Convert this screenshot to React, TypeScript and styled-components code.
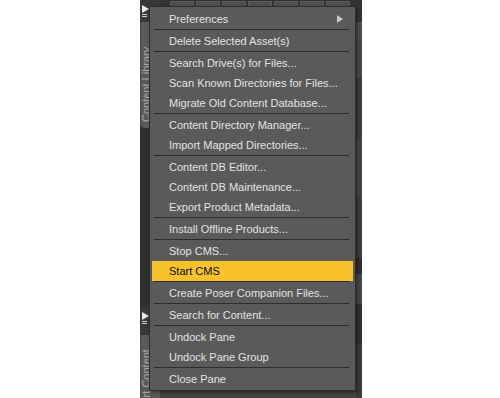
import React from 'react';
import styled, { createGlobalStyle } from 'styled-components';

const GlobalStyle = createGlobalStyle`
  html, body {
    margin: 0;
    padding: 0;
    background: #ffffff;
  }
  body {
    font-family: "Liberation Sans", Arial, sans-serif;
  }
`;

const Stage = styled.div`
  display: flex;
  height: 398px;
  padding-left: 140px;
  overflow: hidden;
`;

const AppWindow = styled.div`
  position: relative;
  width: 222px;
  height: 398px;
  display: grid;
  grid-template-columns: 20px 1fr;
  background: #3a3a3a;
  overflow: hidden;
`;

const Dock = styled.div`
  display: flex;
  flex-direction: column;
  background: #333333;
  overflow: hidden;
`;

const PaneHeader = styled.div<{ $h: number; $pt: number }>`
  flex: none;
  height: ${({ $h }) => $h}px;
  padding: ${({ $pt }) => $pt}px 0 0 1px;
  box-sizing: border-box;
  background: #383838;
`;

/* rotated 180deg: unrotated top becomes the tab's bottom, left becomes right */
const VTab = styled.div<{ $h: number; $pad: number }>`
  flex: none;
  height: ${({ $h }) => $h}px;
  box-sizing: border-box;
  padding: ${({ $pad }) => $pad}px 0 0 10px;
  background: #5a5a5a;
  border-radius: 5px 5px 0 0;
  border-right: 1px solid #4a4a4a;
  color: #a3a9b0;
  font-size: 11px;
  line-height: 10px;
  writing-mode: vertical-rl;
  transform: rotate(180deg);
  white-space: nowrap;
`;

const DockGap = styled.div<{ $h: number }>`
  flex: none;
  height: ${({ $h }) => $h}px;
  background: #2f2f2f;
`;

const Main = styled.div`
  display: flex;
  flex-direction: column;
`;

const TabStrip = styled.div`
  height: 22px;
  display: flex;
  gap: 2px;
  padding: 1px 0 0 10px;
  box-sizing: border-box;
  background: #333333;
`;

const TopTab = styled.div`
  width: 24px;
  height: 20px;
  background: #4e4e4e;
  border: 1px solid #5c5c5c;
  box-sizing: border-box;
`;

const Panel = styled.div`
  flex: 1;
  display: flex;
  justify-content: flex-end;
  background: #444444;
`;

const PanelEdge = styled.div`
  width: 6px;
  display: flex;
  flex-direction: column;
`;

const EdgeBlock = styled.div<{ $h: number; $c: string }>`
  height: ${({ $h }) => $h}px;
  background: ${({ $c }) => $c};
`;

const Menu = styled.div`
  position: absolute;
  left: 9px;
  top: 6px;
  width: 207px;
  box-sizing: border-box;
  background: #5a5a5a;
  border: 1px solid #2c2c2c;
  box-shadow: 2px 2px 3px rgba(0, 0, 0, 0.35);
  padding: 2px 2px 1px;
  font-family: "Liberation Sans", Arial, sans-serif;
  font-size: 11px;
`;

const Item = styled.div<{ $active?: boolean }>`
  position: relative;
  height: 20px;
  display: flex;
  align-items: center;
  padding-left: 17px;
  color: ${({ $active }) => ($active ? '#0a0a0a' : '#e2e2e2')};
  background: ${({ $active }) => ($active ? '#f7c22b' : 'transparent')};
  white-space: nowrap;
`;

const Separator = styled.div`
  height: 2px;
  margin: 0 4px 0 2px;
  box-sizing: border-box;
  border-top: 1px solid #2d2d2d;
`;

const SubArrow = styled.svg`
  position: absolute;
  right: 10px;
  top: 6px;
`;

const PaneMenuIcon = () => (
  <svg width="15" height="12" viewBox="0 0 15 12">
    <polygon points="1,0 8,4 1,8" fill="#e8e8e8" />
    <rect x="8" y="4" width="7" height="1" fill="#d0d0d0" />
    <rect x="1" y="9" width="5" height="1" fill="#cfcfcf" />
    <rect x="1" y="11" width="5" height="1" fill="#cfcfcf" />
  </svg>
);

type Entry = { label?: string; sep?: boolean; active?: boolean; sub?: boolean };

const entries: Entry[] = [
  { label: 'Preferences', sub: true },
  { sep: true },
  { label: 'Delete Selected Asset(s)' },
  { sep: true },
  { label: 'Search Drive(s) for Files...' },
  { label: 'Scan Known Directories for Files...' },
  { label: 'Migrate Old Content Database...' },
  { sep: true },
  { label: 'Content Directory Manager...' },
  { label: 'Import Mapped Directories...' },
  { sep: true },
  { label: 'Content DB Editor...' },
  { label: 'Content DB Maintenance...' },
  { label: 'Export Product Metadata...' },
  { sep: true },
  { label: 'Install Offline Products...' },
  { sep: true },
  { label: 'Stop CMS...' },
  { label: 'Start CMS', active: true },
  { sep: true },
  { label: 'Create Poser Companion Files...' },
  { sep: true },
  { label: 'Search for Content...' },
  { sep: true },
  { label: 'Undock Pane' },
  { label: 'Undock Pane Group' },
  { sep: true },
  { label: 'Close Pane' },
];

const edge = [
  { h: 16, c: '#505050' },
  { h: 40, c: '#4a4a4a' },
  { h: 60, c: '#3e3e3e' },
  { h: 60, c: '#474747' },
  { h: 60, c: '#3f3f3f' },
  { h: 16, c: '#2f2f2f' },
  { h: 30, c: '#484848' },
  { h: 40, c: '#333333' },
  { h: 60, c: '#3c3c3c' },
];

const App = () => (
  <>
    <GlobalStyle />
    <Stage>
      <AppWindow>
        <Dock>
          <PaneHeader $h={22} $pt={3}>
            <PaneMenuIcon />
          </PaneHeader>
          <VTab $h={106} $pad={6}>Content Library</VTab>
          <DockGap $h={179} />
          <PaneHeader $h={28} $pt={3}>
            <PaneMenuIcon />
          </PaneHeader>
          <VTab $h={100} $pad={15}>Smart Content</VTab>
        </Dock>
        <Main>
          <TabStrip>
            <TopTab />
            <TopTab />
            <TopTab />
            <TopTab />
            <TopTab />
            <TopTab />
            <TopTab />
          </TabStrip>
          <Panel>
            <PanelEdge>
              {edge.map((e, i) => (
                <EdgeBlock key={i} $h={e.h} $c={e.c} />
              ))}
            </PanelEdge>
          </Panel>
        </Main>

        <Menu>
          {entries.map((e, i) =>
            e.sep ? (
              <Separator key={i} />
            ) : (
              <Item key={i} $active={e.active}>
                {e.label}
                {e.sub && (
                  <SubArrow width="6" height="8" viewBox="0 0 6 8">
                    <polygon points="0,0 6,4 0,8" fill="#c9c9c9" />
                  </SubArrow>
                )}
              </Item>
            )
          )}
        </Menu>
      </AppWindow>
    </Stage>
  </>
);

export default App;
